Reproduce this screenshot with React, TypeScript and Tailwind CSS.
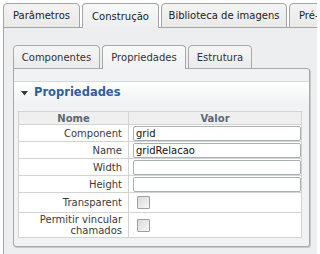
import React from "react";

const outerTabs = [
  { label: "Parâmetros", w: "w-[77px]", active: false },
  { label: "Construção", w: "w-[77px]", active: true },
  { label: "Biblioteca de imagens", w: "w-[126px]", active: false },
  { label: "Pré-visualização", w: "w-[126px]", active: false },
];

const innerTabs = [
  { label: "Componentes", w: "w-[87px]", active: false },
  { label: "Propriedades", w: "w-[84px]", active: true },
  { label: "Estrutura", w: "w-[64px]", active: false },
];

type Row = { label: React.ReactNode; kind: "text" | "check"; value?: string; h: string };

const rows: Row[] = [
  { label: "Component", kind: "text", value: "grid", h: "h-[16px]" },
  { label: "Name", kind: "text", value: "gridRelacao", h: "h-[16px]" },
  { label: "Width", kind: "text", value: "", h: "h-[16px]" },
  { label: "Height", kind: "text", value: "", h: "h-[16px]" },
  { label: "Transparent", kind: "check", h: "h-[20px]" },
  {
    label: (
      <>
        Permitir vincular
        <br />
        chamados
      </>
    ),
    kind: "check",
    h: "h-[25px]",
  },
];

function Checkbox() {
  return <span className="block h-[13px] w-[13px] rounded-[1px] border border-[#9aa0a6] bg-gradient-to-br from-[#d9dadb] to-[#f7f7f7]" />;
}

export default function App() {
  return (
    <div className="h-[254px] w-[317px] overflow-hidden bg-white font-['DejaVu_Sans',sans-serif] text-[10px] text-[#222]">
      {/* top tabs */}
      <div className="relative z-10 -mb-px flex gap-[2px] pl-[3px] pt-[3px]">
        {outerTabs.map((t, i) => (
          <div
            key={t.label}
            className={`${t.w} flex h-[25px] shrink-0 items-center overflow-hidden whitespace-nowrap rounded-t-[4px] border border-[#a5a5a5] ${
              i === 3 ? "justify-start pl-[9px]" : "justify-center"
            } ${t.active ? "border-b-0 bg-gradient-to-b from-[#f8f8f8] to-[#eceeef]" : "bg-gradient-to-b from-[#f4f4f4] to-[#e9e9e9]"}`}
          >
            {t.label}
          </div>
        ))}
      </div>

      <div className="ml-[3px] h-[240px] border-l border-t border-[#a5a5a5] bg-[#eceeef] pl-[9px] pt-[17px]">
        {/* inner tabs */}
        <div className="relative z-10 -mb-px flex gap-[2px]">
          {innerTabs.map((t) => (
            <div
              key={t.label}
              className={`${t.w} flex h-[24px] shrink-0 items-center justify-center rounded-t-[4px] border border-[#a9a9a9] text-[#333] ${
                t.active ? "border-b-0 bg-gradient-to-b from-[#f9f9f9] to-[#f0f2f3]" : "bg-gradient-to-b from-[#f5f5f5] to-[#ebebeb]"
              }`}
            >
              {t.label}
            </div>
          ))}
        </div>

        <div className="h-[179px] w-[297px] rounded-[3px] rounded-tl-none border border-[#a9a9a9] bg-[#f0f2f3] pt-[12px] shadow-[1px_1px_0_#c9c9c9]">
          <div className="flex h-[22px] items-center gap-[6px] border-t border-[#d5d8da] bg-gradient-to-b from-white to-[#f1f2f3] pl-[7px]">
            <svg width="7" height="5" viewBox="0 0 7 5" className="mt-[1px]">
              <polygon points="0,0 7,0 3.5,4.5" fill="#3a3a3a" />
            </svg>
            <span className="text-[11.5px] font-bold text-[#2f5f9e]">Propriedades</span>
          </div>

          <table className="ml-[4px] mt-[8px] w-[284px] table-fixed border-collapse border border-[#d3d3d3] bg-white">
            <colgroup>
              <col className="w-[110px]" />
              <col />
            </colgroup>
            <thead>
              <tr className="bg-[#efefef] text-[#5d6875]">
                <th className="h-[13px] border border-[#d3d3d3] p-0 text-[10px] font-bold leading-[11px]">Nome</th>
                <th className="h-[13px] border border-[#d3d3d3] p-0 text-[10px] font-bold leading-[11px]">Valor</th>
              </tr>
            </thead>
            <tbody>
              {rows.map((r, i) => (
                <tr key={i}>
                  <td className={`${r.h} border border-[#d3d3d3] p-0 pr-[6px] text-right leading-[11px] text-[#3a3a3a]`}>{r.label}</td>
                  {r.kind === "text" ? (
                    <td className={`${r.h} border border-[#d3d3d3] p-0 pl-[4px] pt-px align-bottom`}>
                      <div className="h-[15px] w-full rounded-[2px] border border-[#a7aeb6] bg-white pl-[2px] leading-[13px] text-[#111]">
                        {r.value}
                      </div>
                    </td>
                  ) : (
                    <td className={`${r.h} border border-[#d3d3d3] p-0 pl-[8px]`}>
                      <Checkbox />
                    </td>
                  )}
                </tr>
              ))}
            </tbody>
          </table>
        </div>
      </div>
    </div>
  );
}
